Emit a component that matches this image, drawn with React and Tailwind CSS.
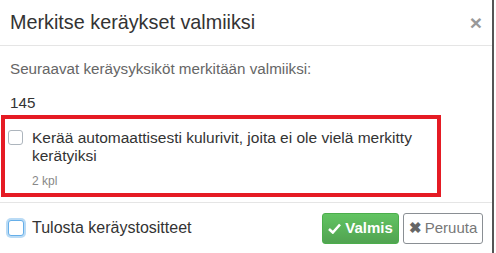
import React from "react";

export default function App() {
  return (
    <div className="w-[496px] h-[253px] bg-white flex" style={{ fontFamily: '"Liberation Sans", Arial, sans-serif' }}>
      <div className="w-[494px] h-full flex flex-col border-r-2 border-[#555]">
        <div className="h-[46px] shrink-0 flex items-center justify-between pl-[10px] pr-[10px] border-b border-[#e5e5e5]">
          <div className="text-[19.8px] text-[#333] leading-none">Merkitse keräykset valmiiksi</div>
          <div className="text-[#999] text-[21px] font-bold leading-none">×</div>
        </div>
        <div className="flex-1 flex flex-col">
          <div className="pl-[10px] pt-[13px] text-[15.2px] text-[#666] leading-[20px]">Seuraavat keräysyksiköt merkitään valmiiksi:</div>
          <div className="pl-[10px] pt-[14px] text-[15.2px] text-[#333] leading-[20px]">145</div>
          <div className="mt-[2px] ml-[1px] w-[440px] h-[82px] border-[4px] border-[#e51b24] flex pl-[3px] pt-[11px]">
            <div className="w-[15px] h-[15px] mt-[0px] border border-[#adb5bd] rounded-[3px] bg-white shrink-0"></div>
            <div className="pl-[9px] -mt-[1px]">
              <div className="text-[15.5px] text-[#333] leading-[18px]">Kerää automaattisesti kulurivit, joita ei ole vielä merkitty kerätyiksi</div>
              <div className="text-[12px] text-[#888] leading-[16px] mt-[8px]">2 kpl</div>
            </div>
          </div>
        </div>
        <div className="h-[51px] shrink-0 border-t border-[#e5e5e5] flex items-center justify-between pl-[8px] pr-[9px]">
          <div className="flex items-center">
            <div className="w-[16px] h-[16px] rounded-[3px] border border-[#66afe9] shadow-[0_0_0_2px_rgba(102,175,233,0.45)] bg-white"></div>
            <div className="pl-[8px] text-[16px] text-[#333]">Tulosta keräystositteet</div>
          </div>
          <div className="flex items-center gap-[4px]">
            <div className="h-[31px] w-[77px] rounded-[3px] bg-gradient-to-b from-[#62c462] to-[#51a351] border border-[#4cae4c] text-white flex items-center justify-center text-[15px] font-bold">
              <svg width="13" height="11" viewBox="0 0 13 11" className="mr-[4px]"><path d="M1 6 L4.8 9.5 L12 1.5" fill="none" stroke="white" strokeWidth="2.6" /></svg>
              Valmis
            </div>
            <div className="h-[31px] w-[80px] rounded-[3px] bg-white border border-[#8a8f94] text-[#777] flex items-center justify-center text-[15px]">
              <span className="font-bold text-[#666] mr-[3px] text-[15px]">✖</span>Peruuta
            </div>
          </div>
        </div>
      </div>
    </div>
  );
}
